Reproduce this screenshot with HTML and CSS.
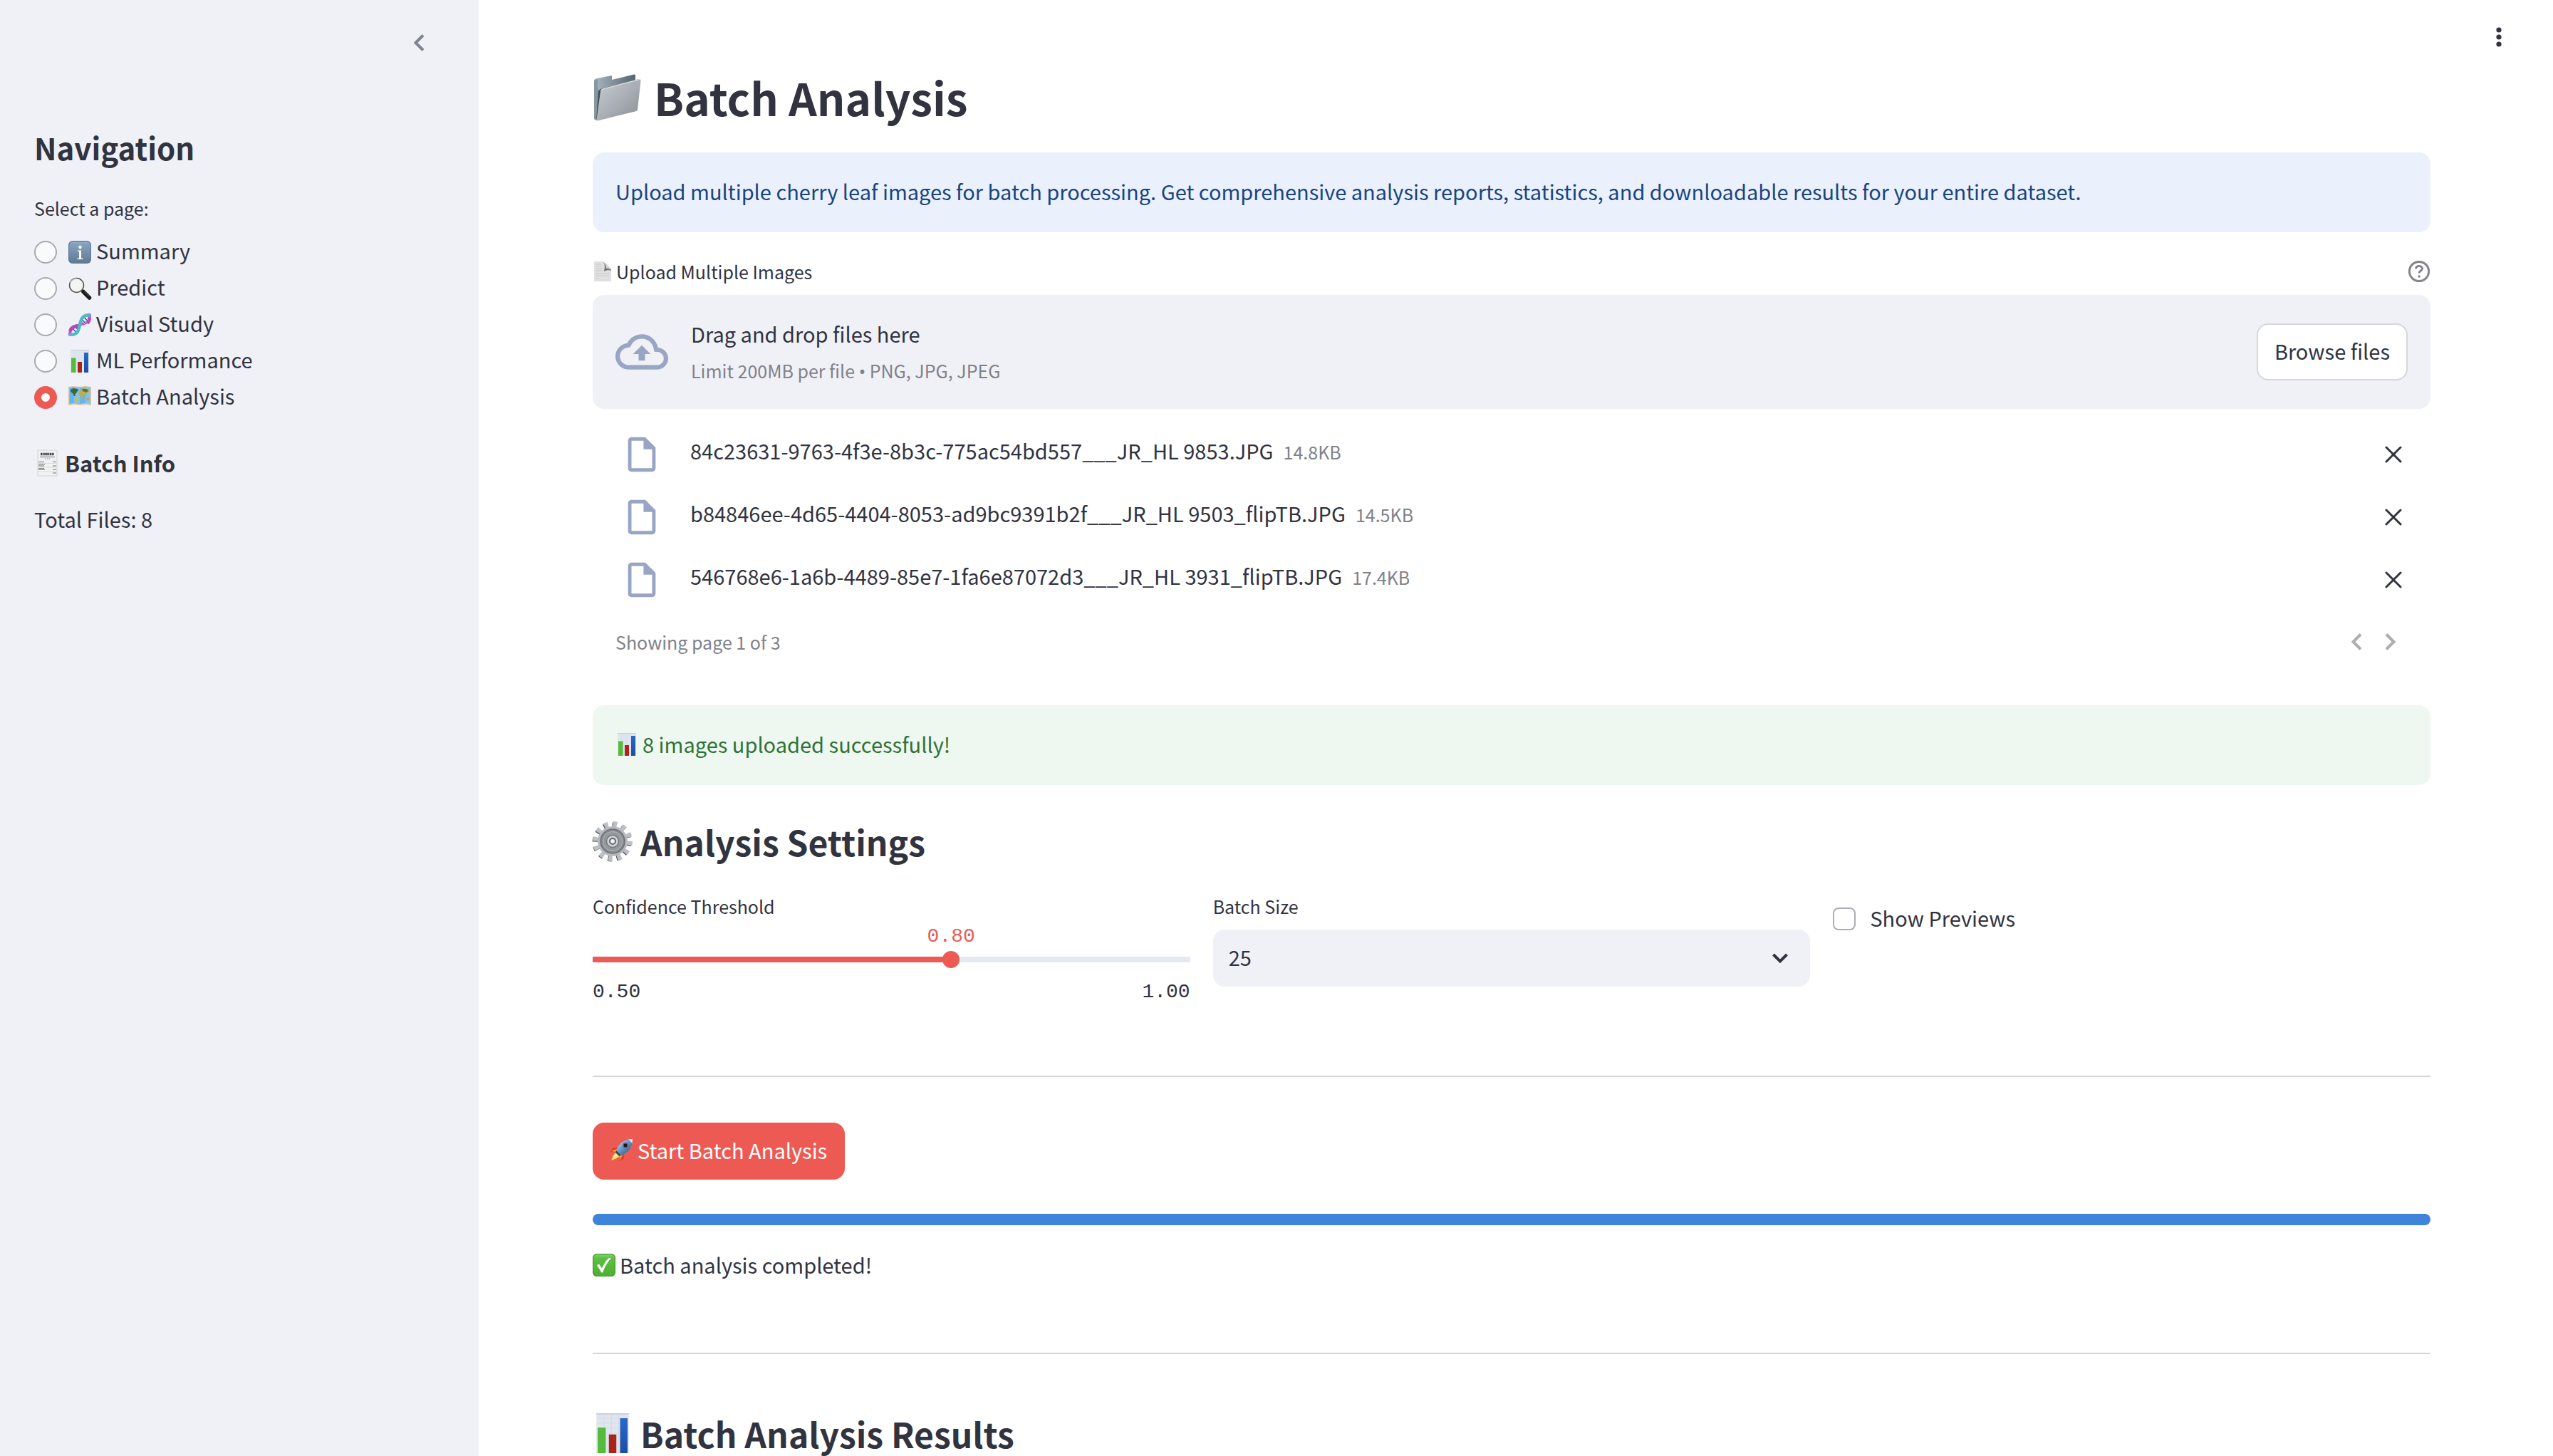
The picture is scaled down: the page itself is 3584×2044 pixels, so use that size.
FILE: index.html
```
<!DOCTYPE html>
<html lang="en">
<head>
<meta charset="utf-8">
<meta name="viewport" content="width=device-width, initial-scale=1">
<title>Batch Analysis</title>
<link rel="stylesheet" href="styles.css">
</head>
<body>
<svg class="sprite" aria-hidden="true">
  <defs>
    <linearGradient id="g-info" x1="0" y1="0" x2="0" y2="1"><stop offset="0" stop-color="#8fb0cf"/><stop offset=".15" stop-color="#86a1bd"/><stop offset="1" stop-color="#5f7890"/></linearGradient>
    <linearGradient id="g-steel" x1="0" y1="0" x2="1" y2="1"><stop offset="0" stop-color="#c9ced4"/><stop offset=".5" stop-color="#abb0b7"/><stop offset="1" stop-color="#898e96"/></linearGradient>
    <linearGradient id="g-back" x1="0" y1="0" x2="1" y2="0"><stop offset="0" stop-color="#a9b7c1"/><stop offset="1" stop-color="#56646f"/></linearGradient>
    <linearGradient id="g-green" x1="0" y1="0" x2="0" y2="1"><stop offset="0" stop-color="#8fd67a"/><stop offset=".2" stop-color="#5cc03f"/><stop offset="1" stop-color="#4fae34"/></linearGradient>
    <linearGradient id="g-curl" x1="0" y1="1" x2="1" y2="0"><stop offset="0" stop-color="#555"/><stop offset=".6" stop-color="#888"/><stop offset="1" stop-color="#ccc"/></linearGradient>
    <linearGradient id="g-blue" x1="0" y1="0" x2="0" y2="1"><stop offset="0" stop-color="#2a66cd"/><stop offset="1" stop-color="#1c4fa3"/></linearGradient>
    <linearGradient id="g-rocket" x1="0" y1="0" x2="1" y2="1"><stop offset="0" stop-color="#d9e9f4"/><stop offset=".5" stop-color="#5c93c4"/><stop offset="1" stop-color="#29455f"/></linearGradient>
  </defs>
  <symbol id="chart" viewBox="0 0 32 32">
    <path d="M3 0h26v32H3z" fill="#dfe6ee"/>
    <path d="M3 4h26M3 8h26M3 12h26M3 16h26M3 20h26M9 0v32M15 0v32M21 0v32" stroke="#cdd8e4" stroke-width=".4"/>
    <path d="M3 .5h26" stroke="#c6ced6"/>
    <path d="M4 11.5h6.500V32H4z" fill="#55bb3c"/>
    <path d="M13 17h6v15h-6z" fill="#ab241b"/>
    <path d="M22 4h6v28h-6z" fill="url(#g-blue)"/>
  </symbol>
  <symbol id="close" viewBox="0 0 24 24"><path d="M2 2l20 20M22 2L2 22" fill="none" stroke="currentColor" stroke-width="3" stroke-linecap="round"/></symbol>
  <symbol id="file" viewBox="0 0 24 24"><path fill="currentColor" d="M14 2H6c-1.100 0-2 .9-2 2v16c0 1.100.9 2 2 2h12c1.100 0 2-.9 2-2V8l-6-6zM6 20V4h7v5h5v11H6z"/></symbol>
  <symbol id="left" viewBox="0 0 16 24"><path d="M14 1.500L3.500 12 14 22.500" fill="none" stroke="currentColor" stroke-width="4"/></symbol>
</svg>
<div class="app">
  <aside class="sidebar">
    <div class="sidebar-head">
      <button class="icon-button" type="button" aria-label="Collapse sidebar"><svg class="chevron"><use href="#left"/></svg></button>
    </div>
    <h2 class="sidebar-title">Navigation</h2>
    <fieldset class="pages">
      <legend>Select a page:</legend>
      <label class="page"><input type="radio" name="page">
        <svg class="emoji" viewBox="0 0 32 32"><rect width="32" height="32" rx="6" fill="url(#g-info)"/><rect x=".7" y=".7" width="30.600" height="30.600" rx="5.500" fill="none" stroke="#5f7c98" stroke-width="1.200"/><circle cx="16.500" cy="9" r="2.200" fill="#fff"/><path d="M13 13.500h5v11h2.500V26h-8v-1.500H15V15h-2z" fill="#fff"/></svg>
        <span>Summary</span></label>
      <label class="page"><input type="radio" name="page">
        <svg class="emoji" viewBox="0 0 32 32"><path d="M18.500 18.500l3 3" stroke="#777" stroke-width="2.500"/><path d="M21 20.500l8.500 8.500" stroke="#191c1e" stroke-width="5.500" stroke-linecap="round"/><path d="M22.500 20l7 7" stroke="#596065" stroke-width="1"/><circle cx="11.500" cy="11.500" r="10" fill="#f3f3f4" stroke="#57534c" stroke-width="1.500"/><path d="M2.500 8a10 10 0 0 1 9-6" fill="none" stroke="#a7b9c4" stroke-width="1.500"/></svg>
        <span>Predict</span></label>
      <label class="page"><input type="radio" name="page">
        <svg class="emoji" viewBox="0 0 32 32"><path d="M2 31C2 19 8 18 15 16.500" fill="none" stroke="#c04fce" stroke-width="4"/><path d="M17 15.500C24 14 30 13 30 1" fill="none" stroke="#c04fce" stroke-width="4"/><path d="M4 20.500l7.500 7M8.500 18l6 6.500M18 7.500l6 6.500M21 4.500l7 7" stroke="#fff" stroke-width="3"/><path d="M5 20.500l6.500 6.500M9 18l5.500 6M18.500 8l5.500 6M21.500 5l6 6" stroke="#33479d" stroke-width="1.500"/><path d="M1 29.500C13 31 14 25 16 16S20 2 31 2" fill="none" stroke="#51b8c6" stroke-width="4.500"/><path d="M13 17.500c-5 1-9 2-10.500 7" fill="none" stroke="#b347c4" stroke-width="5"/><path d="M27 14c2-2.500 3-5 3-8" fill="none" stroke="#b347c4" stroke-width="4"/></svg>
        <span>Visual Study</span></label>
      <label class="page"><input type="radio" name="page">
        <svg class="emoji"><use href="#chart"/></svg>
        <span>ML Performance</span></label>
      <label class="page"><input type="radio" name="page" checked>
        <svg class="emoji" viewBox="0 0 32 32"><path d="M0 1l8-1 8 1 8-1 8 1v26l-8-1-8 1-8-1-8 1z" fill="#dcc6a4"/><path d="M1.500 2.500L8 1.500l8 1 8-1 6.500 1v22L24 24l-8 1-8-1-6.500 1z" fill="#64b5e8"/><path d="M8 1.500l8 1V25l-8-1zM24 1.500l6.500 1V25L24 24z" fill="#8acbf0" opacity=".65"/><path d="M3 5l4-2 6 1 1 2-2 2-1 2-2 2 1 2-2 0-2-4-3-2z" fill="#3f6640"/><path d="M10 14l4 2-1 3-2 4-1-4z" fill="#d6bb46"/><path d="M15 8l3-4 5-1 6 2v3l-3 3-2 2-3-2 0 3-2 4-2-4-3-3z" fill="#c1ae4b"/><path d="M19 4l7 0 2 3-3 2-5-2z" fill="#4f7a42"/><path d="M25 17l3-1 1 3-3 1z" fill="#e09a43"/></svg>
        <span>Batch Analysis</span></label>
    </fieldset>
    <h3 class="sidebar-subtitle">
      <svg class="emoji-sub" viewBox="0 0 36 36"><path d="M5 0h27v36H5z" fill="#f1f1f1" stroke="#d3d3d3"/><path d="M9 5.500h19" stroke="#444" stroke-width="3.500" stroke-dasharray="2 .6"/><path d="M8 9.500h21" stroke="#888" stroke-width="1.200"/><path d="M15 12h7" stroke="#999" stroke-dasharray="2 1"/><path d="M6 16.500h8M26 16.500h5M6 20h9M6 22h8M26 22h5M6 25.500h8M6 27.500h9M26 27.500h5M26 32h5" stroke="#777" stroke-width="1.200"/><path d="M6 18.500h25M6 24h25M6 30h25" stroke="#ccc" stroke-width=".6"/></svg>
      <span>Batch Info</span></h3>
    <p class="total">Total Files: 8</p>
  </aside>

  <main class="main">
    <header class="topbar">
      <button class="icon-button" type="button" aria-label="Main menu"><svg class="dots" viewBox="0 0 40 40"><circle cx="20" cy="10" r="3.600"/><circle cx="20" cy="20" r="3.600"/><circle cx="20" cy="30" r="3.600"/></svg></button>
    </header>
    <div class="content">
      <h1>
        <svg class="emoji-title" viewBox="0 0 72 72"><path d="M2 13q0-2 2-2.500L27 6v6l31-7.500q2-.5 2 1.500v50L5 69q-2.500 0-3-3z" fill="url(#g-back)"/><path d="M2 13v54l5 2 4-42-4-2V11z" fill="#8797a2"/><path d="M5 68L8 28l3-3 48-12v10z" fill="#3f4e59"/><path d="M14 24.500L64 11q4-.5 3.500 3L63 54q0 1.500-2 2L7 69.500q-2 0-1.500-2L11 28q.5-3 3-3.500z" fill="url(#g-steel)"/><path d="M11.500 27.500q.5-2 3-2.500L66 11.500" fill="none" stroke="#e0e6ea" stroke-width="1"/></svg>
        <span>Batch Analysis</span></h1>

      <p class="notice notice-info">Upload multiple cherry leaf images for batch processing. Get comprehensive analysis reports, statistics, and downloadable results for your entire dataset.</p>

      <section class="uploader">
        <div class="field-label">
          <label for="browse" class="label-text"><svg class="emoji-label" viewBox="0 0 28 28"><path d="M2 0h13l11 12v16H2z" fill="#e0e0e0"/><path d="M4 4h8M4 7h8M4 10h9M4 13h10M4 17h19M4 20h19M4 24h5" stroke="#cacaca"/><path d="M14 0c4 4 3 9 2 14 3-2 7-2 10-1v-2z" fill="url(#g-curl)"/><path d="M14 0c4 2 9 6 12 12-4-3-6-2-7-2 0-3-1-7-5-10z" fill="#d2d2d2"/></svg><span>Upload Multiple Images</span></label>
          <svg class="help" viewBox="0 0 32 32" role="img" aria-label="Help"><circle cx="16" cy="16" r="13.600"/><path d="M11.500 12.500c0-5.500 9-5 9-.5 0 3-4.500 3-4.500 6.500"/><circle class="help-dot" cx="16" cy="23" r="1.800"/></svg>
        </div>
        <div class="dropzone">
          <svg class="cloud" viewBox="0 0 24 24"><path fill="currentColor" d="M19.350 10.040A7.490 7.490 0 0 0 12 4C9.110 4 6.600 5.640 5.350 8.040A5.994 5.994 0 0 0 0 14c0 3.310 2.690 6 6 6h13c2.760 0 5-2.240 5-5 0-2.640-2.050-4.780-4.650-4.960zM19 18H6c-2.210 0-4-1.790-4-4 0-2.050 1.530-3.760 3.560-3.970l1.070-.11.500-.95A5.469 5.469 0 0 1 12 6c2.620 0 4.880 1.860 5.390 4.430l.3 1.500 1.530.110A2.980 2.980 0 0 1 22 15c0 1.650-1.350 3-3 3zM8 13h2.550v3h2.900v-3H16l-4-4z"/></svg>
          <div class="drop-text">
            <p>Drag and drop files here</p>
            <p class="small">Limit 200MB per file <span class="bullet">•</span> PNG, JPG, JPEG</p>
          </div>
          <button class="button" id="browse" type="button">Browse files</button>
        </div>
        <ul class="files">
          <li><svg class="file-icon"><use href="#file"/></svg><p>84c23631-9763-4f3e-8b3c-775ac54bd557___JR_HL 9853.JPG<small class="small">14.8KB</small></p><button class="icon-button" type="button" aria-label="Remove file"><svg class="close"><use href="#close"/></svg></button></li>
          <li><svg class="file-icon"><use href="#file"/></svg><p>b84846ee-4d65-4404-8053-ad9bc9391b2f___JR_HL 9503_flipTB.JPG<small class="small">14.5KB</small></p><button class="icon-button" type="button" aria-label="Remove file"><svg class="close"><use href="#close"/></svg></button></li>
          <li><svg class="file-icon"><use href="#file"/></svg><p>546768e6-1a6b-4489-85e7-1fa6e87072d3___JR_HL 3931_flipTB.JPG<small class="small">17.4KB</small></p><button class="icon-button" type="button" aria-label="Remove file"><svg class="close"><use href="#close"/></svg></button></li>
        </ul>
        <div class="pager">
          <p class="small">Showing page 1 of 3</p>
          <button class="pager-button" type="button" aria-label="Previous page"><svg class="chevron"><use href="#left"/></svg></button>
          <button class="pager-button" type="button" aria-label="Next page"><svg class="chevron next"><use href="#left"/></svg></button>
        </div>
      </section>

      <p class="notice notice-success"><svg class="emoji"><use href="#chart"/></svg><span>8 images uploaded successfully!</span></p>

      <h2>
        <svg class="emoji-heading" viewBox="0 0 56 56"><circle cx="27" cy="29" r="23.500" fill="none" stroke="#5d5550" stroke-width="8" stroke-dasharray="5.500 6.800"/><circle cx="28" cy="28" r="23.500" fill="none" stroke="#bac0c8" stroke-width="9" stroke-dasharray="5.500 6.800"/><circle cx="28" cy="28" r="21" fill="#b5b9bf"/><circle cx="28" cy="28" r="17" fill="#85888c" stroke="#6e7175" stroke-width="1.500"/><circle cx="28" cy="28" r="13.500" fill="#94979b" stroke="#a8abb0" stroke-width="1.500"/><circle cx="28" cy="28" r="8.500" fill="#d0d3d8" stroke="#74777c" stroke-width="1.500"/><circle cx="28" cy="28" r="4" fill="#f4f4f6" stroke="#63676e" stroke-width="2"/></svg>
        <span>Analysis Settings</span></h2>

      <div class="settings">
        <div>
          <div class="field-label"><label class="label-text" for="threshold">Confidence Threshold</label></div>
          <div class="slider" style="--value: 60%">
            <output for="threshold">0.80</output>
            <input id="threshold" type="range" min="0.5" max="1" step="0.05" value="0.8">
            <div class="range-ends"><span>0.50</span><span>1.00</span></div>
          </div>
        </div>
        <div>
          <div class="field-label"><label class="label-text" for="size">Batch Size</label></div>
          <div class="select">
            <select id="size"><option>10</option><option selected>25</option><option>50</option></select>
            <svg class="caret" viewBox="0 0 24 16"><path d="M2.500 3L12 12.500 21.500 3" fill="none" stroke="currentColor" stroke-width="4"/></svg>
          </div>
        </div>
        <label class="check"><input type="checkbox"><span>Show Previews</span></label>
      </div>

      <hr>

      <button class="button primary" type="button"><svg class="emoji" viewBox="0 0 32 32"><path d="M10 13L3 13.500 0 19l7-.5zM19 22l-.5 7-6 3 1-8z" fill="#e33b20"/><path d="M1 18l8-3-1 4zM13 31l4-7-4-1z" fill="#f59a3c"/><path d="M8 19L4 24l-3 7 8-3 5-4z" fill="#ffe254"/><path d="M7 22l-3 5 6-3z" fill="#fffbd0"/><path d="M8 17C11 8 19 1 31 1c0 12-7 20-16 23z" fill="url(#g-rocket)"/><path d="M8 17l7 7-3 1-5-5z" fill="#30475c"/><path d="M25 1.500l6-.5-.5 6z" fill="#dbe4e9"/><circle cx="21" cy="10" r="3.800" fill="#b8433b"/><circle cx="21" cy="10" r="2.400" fill="#13181f"/></svg><span>Start Batch Analysis</span></button>

      <progress max="100" value="100" aria-label="Batch progress"></progress>
      <p class="status"><svg class="emoji" viewBox="0 0 32 32"><rect width="32" height="32" rx="6" fill="url(#g-green)"/><rect x=".6" y=".6" width="30.800" height="30.800" rx="5.500" fill="none" stroke="#459a30" stroke-width="1.200"/><path d="M6 16l3-1.500 4 6C16 14 19.500 8.500 23 6l3 .5C20.500 12 17 18.500 14 26.500h-1.500z" fill="#fff"/></svg><span>Batch analysis completed!</span></p>

      <hr>

      <h2><svg class="emoji-heading"><use href="#chart"/></svg><span>Batch Analysis Results</span></h2>
    </div>
  </main>
</div>
</body>
</html>
```
FILE: styles.css
```
:root {
  --ink: #31333f;
  --muted: #808189;
  --panel: #f0f1f6;
  --red: #ed5a53;
  --icon: #99a5c4;
  --line: #d6d6d9;
}

* { box-sizing: border-box; }

body {
  margin: 0;
  background: #fff;
  color: var(--ink);
  font: 29px/51px "Noto Sans CJK SC", "Noto Sans", sans-serif;
}

h1, h2, h3, p, ul { margin: 0; padding: 0; }

svg { display: block; flex: none; overflow: visible; }

button, select { font: inherit; color: inherit; cursor: pointer; }

.sprite { position: absolute; width: 0; height: 0; }

.app { display: flex; min-height: 100vh; }

/* Shared pieces */
.emoji { width: 32px; height: 32px; }
.emoji-label { width: 28px; height: 28px; }
.emoji-sub { width: 36px; height: 36px; }
.emoji-heading { width: 56px; height: 56px; }
.emoji-title { width: 72px; height: 72px; }

.chevron { width: 16px; height: 24px; }
.next { transform: rotate(180deg); }

.icon-button {
  display: flex;
  align-items: center;
  justify-content: center;
  width: 40px;
  height: 40px;
  padding: 0;
  border: 0;
  background: none;
}

.small { font-size: 25px; color: var(--muted); }
.bullet { font-family: "Noto Sans", sans-serif; }

/* Sidebar */
.sidebar {
  flex: none;
  width: 672px;
  padding: 0 48px;
  background: var(--panel);
}

.sidebar-head {
  display: flex;
  justify-content: flex-end;
  height: 178px;
  padding: 40px 16px;
  color: #7f8495;
}

.sidebar-title { font-size: 42px; line-height: 58px; }

.pages { margin: 36px 0 0; padding: 0; border: 0; }
.pages legend { padding: 0; margin-bottom: 16px; font-size: 25px; line-height: 40px; }

.page { display: flex; align-items: center; height: 51px; cursor: pointer; }
.page span { padding: 0 0 4px 7px; }

.page input {
  appearance: none;
  width: 32px;
  height: 32px;
  margin: 0 16px 0 0;
  border: 2px solid #a9aab2;
  border-radius: 50%;
  background: #f9fafc;
}
.page input:checked { border: 10px solid var(--red); }

.sidebar-subtitle {
  display: flex;
  align-items: center;
  gap: 7px;
  margin: 45px 0 31px;
  font-size: 31px;
  line-height: 44px;
}

/* Main column */
.main { flex: 1; min-width: 0; }

.topbar {
  display: flex;
  justify-content: flex-end;
  height: 93px;
  padding: 32px 56px 0;
}
.dots { width: 40px; height: 40px; fill: var(--ink); }

.content {
  display: flex;
  flex-direction: column;
  padding: 0 172px 0 160px;
}

h1 {
  display: flex;
  align-items: center;
  gap: 14px;
  margin-bottom: 35px;
  font-size: 62px;
  line-height: 86px;
}

.content h2 {
  display: flex;
  align-items: center;
  gap: 11px;
  font-size: 48px;
  line-height: 64px;
}

.notice { padding: 29px 32px 32px; border-radius: 16px; }
.notice-info { background: #eaf1fc; color: #1a4480; }
.notice-success {
  display: flex;
  align-items: center;
  gap: 6px;
  margin-bottom: 47px;
  background: #eff8f0;
  color: #2f7238;
}

.field-label {
  display: flex;
  align-items: center;
  justify-content: space-between;
  height: 48px;
  padding-bottom: 2px;
}
.label-text { display: flex; align-items: center; gap: 5px; font-size: 25px; }

/* File uploader */
.uploader { margin: 32px 0 46px; }

.help { width: 32px; height: 32px; fill: none; stroke: #84858c; stroke-width: 3; }
.help-dot { fill: #84858c; stroke: none; }

.dropzone {
  display: flex;
  align-items: center;
  gap: 32px;
  margin-top: 8px;
  padding: 27px 32px;
  border-radius: 16px;
  background: var(--panel);
}
.cloud { width: 74px; height: 74px; color: var(--icon); }
.drop-text { flex: 1; padding-top: 2px; }
.drop-text .small { padding-top: 1px; }

.button {
  display: inline-flex;
  align-items: center;
  align-self: center;
  height: 80px;
  padding: 0 23px 4px;
  border: 2px solid var(--line);
  border-radius: 16px;
  background: #fff;
}

.files { margin-top: 20px; list-style: none; }
.files li { display: flex; align-items: center; height: 88px; padding: 0 32px; }
.files p { flex: 1; padding: 0 0 10px 31px; }
.files .small { margin-left: 14px; }
.file-icon { width: 58px; height: 58px; margin: 0 8px; color: var(--icon); }
.close { width: 24px; height: 24px; }

.pager { display: flex; align-items: center; height: 86px; padding: 0 32px; }
.pager p { flex: 1; }
.pager-button {
  display: flex;
  justify-content: center;
  width: 48px;
  padding: 0;
  border: 0;
  background: none;
  color: #acadb2;
}

/* Settings */
.settings {
  display: grid;
  grid-template-columns: repeat(3, 1fr);
  gap: 32px;
  margin: 36px 0 101px;
}

.slider { font: 28px/32px "Liberation Mono", monospace; }
.slider output {
  display: block;
  width: max-content;
  margin-left: var(--value);
  color: var(--red);
  line-height: 36px;
  transform: translateX(-50%);
}
/* The input overhangs the rail by half a thumb on each side */
.slider input {
  appearance: none;
  display: block;
  width: calc(100% + 24px);
  height: 24px;
  margin: 2px -12px 18px;
  background: linear-gradient(to right, var(--red) var(--value), #e5e8f0 var(--value)) center / calc(100% - 24px) 8px no-repeat;
}
.slider input::-webkit-slider-thumb {
  appearance: none;
  width: 24px;
  height: 24px;
  border-radius: 50%;
  background: var(--red);
}
.range-ends { display: flex; justify-content: space-between; }

.select { display: grid; align-items: center; margin-top: 8px; }
.select select {
  grid-area: 1 / 1;
  appearance: none;
  width: 100%;
  height: 80px;
  padding: 0 22px 4px;
  border: 0;
  border-radius: 16px;
  background: var(--panel);
}
.caret {
  grid-area: 1 / 1;
  justify-self: end;
  width: 24px;
  height: 16px;
  margin-right: 30px;
  pointer-events: none;
}

.check { display: flex; align-items: center; align-self: start; gap: 20px; padding-top: 14px; }
.check span { padding-bottom: 2px; }
.check input {
  appearance: none;
  width: 32px;
  height: 32px;
  margin: 0;
  border: 2px solid #adaeb3;
  border-radius: 8px;
}

hr { width: 100%; height: 2px; margin: 0; border: 0; background: var(--line); }

.button.primary {
  align-self: flex-start;
  gap: 6px;
  margin: 64px 0 48px;
  border-color: var(--red);
  background: var(--red);
  color: #fff;
}

progress {
  appearance: none;
  display: block;
  width: 100%;
  height: 16px;
  border: 0;
  border-radius: 8px;
  overflow: hidden;
}
progress::-webkit-progress-bar { background: var(--panel); }
progress::-webkit-progress-value { background: #3d84da; }

.status { display: flex; align-items: center; gap: 6px; margin: 30px 0 98px; }

hr + h2 { margin-top: 79px; }
```
